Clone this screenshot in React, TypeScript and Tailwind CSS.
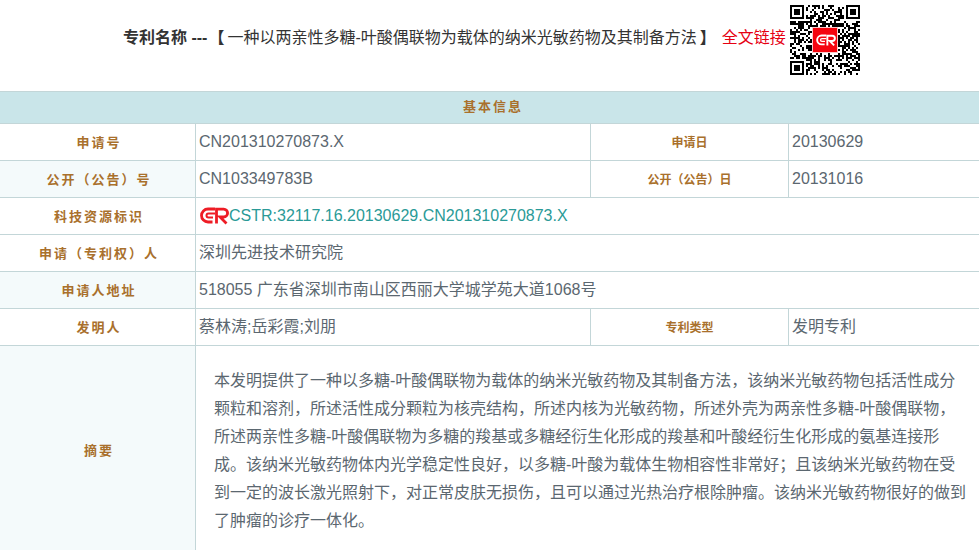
const font = "[font-family:'Liberation_Sans','Noto_Sans_CJK_SC',sans-serif]";

function CrMark({ color }: { color: string }) {
  return (
    <g fill="none" stroke={color}>
      <path d="M15.5 2H8.5a6.5 6.5 0 0 0 0 13H13" strokeWidth="2.8" />
      <path d="M15.5 6.5H9a2 2 0 0 0 0 4h4.5" strokeWidth="2" />
      <path d="M17 16.5V2.2h7.2a3.9 3.9 0 0 1 0 7.8H20.5l6.5 6.5" strokeWidth="2.8" />
    </g>
  );
}

// qr modules, not a real code, only the look of one
function QrCode() {
  const size = 35;
  const cells: string[] = [];
  let seed = 7;
  const next = () => {
    seed = (seed * 1103515245 + 12345) & 0x7fffffff;
    return (seed >> 16) % 100;
  };
  for (let y = 0; y < size; y++) {
    for (let x = 0; x < size; x++) {
      const inFinder = (x < 8 && y < 8) || (x > 26 && y < 8) || (x < 8 && y > 26);
      if (inFinder) continue;
      if (next() < 52) cells.push(`M${x} ${y}h1v1h-1z`);
    }
  }
  const finder = (x: number, y: number) => (
    <g key={`${x}-${y}`}>
      <path d={`M${x} ${y}h7v7h-7z M${x + 1} ${y + 1}v5h5v-5z`} fillRule="evenodd" fill="#000" />
      <rect x={x + 2} y={y + 2} width="3" height="3" fill="#000" />
    </g>
  );
  return (
    <svg width="70" height="70" viewBox="0 0 35 35" shapeRendering="crispEdges" className="shrink-0">
      <path d={cells.join("")} fill="#000" />
      {finder(0, 0)}
      {finder(28, 0)}
      {finder(0, 28)}
      <rect x="11" y="11" width="13" height="13" fill="#f7c9c9" />
      <rect x="11.5" y="11.5" width="12" height="12" fill="#f5050f" />
      <g transform="translate(12.9 14.6) scale(0.34)" shapeRendering="auto">
        <CrMark color="#fff" />
      </g>
    </svg>
  );
}

function CstrLogo() {
  return (
    <svg width="30" height="18" viewBox="0 0 29 18" className="shrink-0">
      <CrMark color="#ee1c25" />
    </svg>
  );
}

function Label({ children, tint }: { children: React.ReactNode; tint?: boolean }) {
  return (
    <div
      className={`flex w-[196px] items-center justify-center border-r border-[#c3d6d8] pt-[2px] pl-[3px] text-[13px] font-bold tracking-[2px] text-[#a9702c] ${
        tint ? "bg-[#f4fafb]" : "bg-white"
      }`}
    >
      {children}
    </div>
  );
}

function SideLabel({ children }: { children: React.ReactNode }) {
  return (
    <div className="flex w-[198px] items-center justify-center border-r border-[#c3d6d8] pt-[2px] text-[12px] font-bold text-[#a9702c]">
      {children}
    </div>
  );
}

function Value({ children, grow }: { children: React.ReactNode; grow?: boolean }) {
  return (
    <div
      className={`flex items-center pl-[3px] text-[16px] text-[#5b6770] ${
        grow ? "flex-1" : "w-[395px] border-r border-[#c3d6d8]"
      }`}
    >
      {children}
    </div>
  );
}

function Row({ children }: { children: React.ReactNode }) {
  return <div className="flex h-[37px] border-b border-[#c3d6d8]">{children}</div>;
}

export default function App() {
  return (
    <div className={`h-[550px] w-[979px] overflow-hidden bg-white ${font}`}>
      <div className="flex h-[91px] items-start pl-[123px] pt-[5px] text-[16px] leading-[66px]">
        <span className="font-bold text-[#333]">专利名称 ---</span>
        <span className="ml-[1px] font-bold text-[#333]">【</span>
        <span className="ml-[3px] text-[#333]">一种以两亲性多糖-叶酸偶联物为载体的纳米光敏药物及其制备方法</span>
        <span className="ml-[3px] font-bold text-[#333]">】</span>
        <a className="ml-[6px] text-[#e60012]">全文链接</a>
        <span className="ml-[4px]">
          <QrCode />
        </span>
      </div>

      <div className="flex h-[33px] items-center justify-center border-y border-[#c3d6d8] bg-[#c9e5e9] pb-[2px] pl-[7px] text-[13px] font-bold tracking-[2px] text-[#a9702c]">
        基本信息
      </div>

      <Row>
        <Label>申请号</Label>
        <Value>CN201310270873.X</Value>
        <SideLabel>申请日</SideLabel>
        <Value grow>20130629</Value>
      </Row>
      <Row>
        <Label tint>公开（公告）号</Label>
        <Value>CN103349783B</Value>
        <SideLabel>公开（公告）日</SideLabel>
        <Value grow>20131016</Value>
      </Row>
      <Row>
        <Label>科技资源标识</Label>
        <Value grow>
          <CstrLogo />
          <a className="text-[#2a9a97]">CSTR:32117.16.20130629.CN201310270873.X</a>
        </Value>
      </Row>
      <Row>
        <Label>申请（专利权）人</Label>
        <Value grow>深圳先进技术研究院</Value>
      </Row>
      <Row>
        <Label tint>申请人地址</Label>
        <Value grow>518055 广东省深圳市南山区西丽大学城学苑大道1068号</Value>
      </Row>
      <Row>
        <Label>发明人</Label>
        <Value>蔡林涛;岳彩霞;刘朋</Value>
        <SideLabel>专利类型</SideLabel>
        <Value grow>发明专利</Value>
      </Row>

      <div className="flex h-[208px]">
        <Label tint>摘要</Label>
        <p className="flex-1 pt-[21px] pl-[18px] pr-[10px] text-[16px] leading-[28px] text-[#5b6770]">
          本发明提供了一种以多糖-叶酸偶联物为载体的纳米光敏药物及其制备方法，该纳米光敏药物包括活性成分颗粒和溶剂，所述活性成分颗粒为核壳结构，所述内核为光敏药物，所述外壳为两亲性多糖-叶酸偶联物，所述两亲性多糖-叶酸偶联物为多糖的羧基或多糖经衍生化形成的羧基和叶酸经衍生化形成的氨基连接形成。该纳米光敏药物体内光学稳定性良好，以多糖-叶酸为载体生物相容性非常好；且该纳米光敏药物在受到一定的波长激光照射下，对正常皮肤无损伤，且可以通过光热治疗根除肿瘤。该纳米光敏药物很好的做到了肿瘤的诊疗一体化。
        </p>
      </div>
    </div>
  );
}
